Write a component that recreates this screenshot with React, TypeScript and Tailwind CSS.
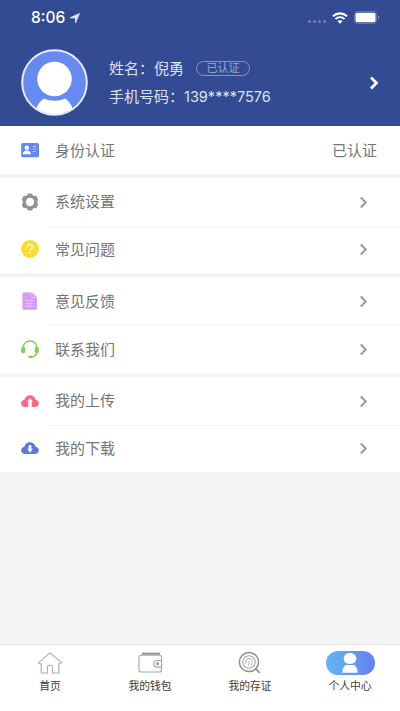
import React from "react";

type Row = {
  label: string;
  icon: React.ReactNode;
  value?: string;
};

const CloudIcon = ({ color, down }: { color: string; down?: boolean }) => (
  <svg width="18" height="18" viewBox="0 0 18 18">
    <path
      d="M4.300 15C1.900 15 .1 13.400.1 11.300c0-1.800 1.400-3.300 3.300-3.600C3.900 5.100 6.200 3.200 9 3.200s5.100 1.900 5.600 4.500c1.900.3 3.300 1.800 3.300 3.600 0 2.100-1.800 3.700-4.200 3.700z"
      fill={color}
    />
    <path
      d={down ? "M7.600 6.200h2.800v3.600h1.400L9 13.800 6.200 9.800h1.400z" : "M9 6.200l3 3.400h-1.200v5.400H7.200V9.600H6z"}
      fill="#fff"
    />
  </svg>
);

const groups: Row[][] = [
  [
    {
      label: "身份认证",
      value: "已认证",
      icon: (
        <svg width="18" height="18" viewBox="0 0 18 18">
          <rect x="0.200" y="2" width="17.800" height="14.200" rx="1.500" fill="#6488f2" />
          <circle cx="5.800" cy="6.800" r="2.200" fill="#fff" />
          <path d="M1.700 13.300c0-2.400 1.600-3.800 4.100-3.800s4.100 1.400 4.100 3.800z" fill="#fff" />
          <path d="M11.700 5.500h3.800M11.700 8h3.800M11.700 10.500h3.300" stroke="#b4c6fb" strokeWidth="1.100" />
        </svg>
      ),
    },
  ],
  [
    {
      label: "系统设置",
      icon: (
        <svg width="18" height="18" viewBox="0 0 18 18">
          <path
            d="M7 .5h4l.7 1.700 1.600.9 2-.3 1.900 3.400L16.300 8v2l.9 1.800-1.900 3.400-2-.3-1.600.9-.7 1.700H7l-.7-1.700-1.600-.9-2 .3L.8 11.800 1.700 10V8L.8 6.200l1.900-3.400 2 .3 1.600-.9z"
            fill="#929292"
          />
          <circle cx="9" cy="9" r="4.200" fill="#fff" />
        </svg>
      ),
    },
    {
      label: "常见问题",
      icon: (
        <svg width="18" height="18" viewBox="0 0 18 18">
          <circle cx="9" cy="9" r="8.900" fill="#fcdb2c" />
          <path d="M6.300 7.200C6.300 5.500 7.500 4.600 9 4.600s2.700.9 2.700 2.300c0 1.700-2.500 1.900-2.500 3.900" fill="none" stroke="#fff8d0" strokeWidth="1.500" />
          <circle cx="9.200" cy="13" r="1" fill="#fff8d0" />
        </svg>
      ),
    },
  ],
  [
    {
      label: "意见反馈",
      icon: (
        <svg width="18" height="18" viewBox="0 0 18 18">
          <path d="M2.900.4h8.300l4.800 4.800v11c0 .9-.6 1.600-1.500 1.600H2.900c-.9 0-1.500-.7-1.500-1.600V2C1.400 1.100 2 .4 2.900.4z" fill="#d79bf8" />
          <path d="M11 .8v4.700h4.600" fill="none" stroke="#e8c5fc" strokeWidth="0.900" />
          <path d="M4.500 8.500h8M4.500 11.300h8M4.500 14.100h8" stroke="#e8c8fc" strokeWidth="1.100" />
        </svg>
      ),
    },
    {
      label: "联系我们",
      icon: (
        <svg width="18" height="18" viewBox="0 0 18 18">
          <path d="M2 8.500C2 3.800 5 1.100 9 1.100s7 2.700 7 7.400M16 11c0 3.800-2.800 6-6.500 6.100" fill="none" stroke="#7fd344" strokeWidth="1.500" />
          <rect x="0.200" y="6.800" width="4" height="6.400" rx="1.700" fill="#7fd344" />
          <rect x="13.800" y="6.800" width="4" height="6.400" rx="1.700" fill="#7fd344" />
          <rect x="7.300" y="15.800" width="4.500" height="2.200" rx="1.100" fill="#7fd344" />
        </svg>
      ),
    },
  ],
  [
    { label: "我的上传", icon: <CloudIcon color="#fa6684" /> },
    { label: "我的下载", icon: <CloudIcon color="#5c79da" down /> },
  ],
];

const tabs = [
  {
    label: "首页",
    icon: (
      <svg width="26" height="24" viewBox="0 0 26 24" fill="none" stroke="#ababab" strokeWidth="1.100" strokeLinejoin="round">
        <path d="M13 1.800L1.500 11.600l1 1.200h1.700v9.200h6.300v-6c0-1 .8-1.700 1.700-1.700h1.600c1 0 1.700.7 1.700 1.700v6h6.300v-9.200h1.700l1-1.200z" />
      </svg>
    ),
  },
  {
    label: "我的钱包",
    icon: (
      <svg width="26" height="24" viewBox="0 0 26 24" fill="none" stroke="#a6a6a6" strokeWidth="1.100">
        <path d="M5 2.700h18" stroke="#969696" strokeWidth="2.200" />
        <rect x="2" y="4.200" width="22.500" height="16.800" rx="2" />
        <path d="M24.500 9.500h-4.500a3.300 3.300 0 0 0 0 6.600h4.500" />
        <circle cx="20.500" cy="12.800" r="1.200" fill="#a6a6a6" />
      </svg>
    ),
  },
  {
    label: "我的存证",
    icon: (
      <svg width="26" height="24" viewBox="0 0 26 24" fill="none" stroke="#8f8f8f">
        <circle cx="12" cy="11" r="9.600" strokeWidth="1.500" />
        <circle cx="12" cy="11" r="6.200" stroke="#a5a5a5" strokeWidth="1.100" />
        <path d="M8.800 12.700c0-4.200 1-5.200 3.200-5.200s3.200 1.300 3.200 3.700M11.200 14.700c.8-1.500.8-2.700.8-4.200M13.900 14.500c.6-.8 1-1.600 1.200-2.300" stroke="#a5a5a5" />
        <path d="M18.600 17.700l4.200 4.300" strokeWidth="1.700" />
      </svg>
    ),
  },
  {
    label: "个人中心",
    active: true,
    icon: (
      <svg width="26" height="24" viewBox="0 0 26 24" fill="#fff">
        <path d="M13 2c3.800 0 6.300 2.400 6.300 5.600S17 13 13 13 6.700 10.800 6.700 7.600 9.200 2 13 2z" />
        <path d="M8.600 14h8.800c1.900 1.400 3.100 3.800 3.400 7.700H5.200c.3-3.900 1.500-6.300 3.400-7.700z" />
      </svg>
    ),
  },
];

function StatusBar() {
  return (
    <div className="flex h-[35px] items-center justify-between pr-[20px] pl-[31px]">
      <div className="flex items-center gap-1">
        <span className="font-[Inter] text-[15.500px] font-medium leading-none">8:06</span>
        <svg width="12" height="12" viewBox="0 0 12 12">
          <path d="M1 5.800L10.500 1.500 6.500 11V6z" fill="#dfe5f5" stroke="#dfe5f5" strokeWidth="0.800" strokeLinejoin="round" />
        </svg>
      </div>
      <div className="flex items-center">
        <div className="mt-2 mr-[6px] flex gap-[2px]">
          {[0, 1, 2, 3].map((i) => (
            <span key={i} className="h-[2.500px] w-[3px] rounded-full bg-[#7083b8]" />
          ))}
        </div>
        <svg width="16" height="12" viewBox="0 0 16 12" fill="none" stroke="#fff" strokeWidth="2.100">
          <path d="M1 4.200C5 .4 11 .4 15 4.200M3.500 7.100c2.600-2.500 6.400-2.500 9 0" />
          <path d="M8 11.800L5.500 9.200c1.400-1.200 3.600-1.200 5 0z" fill="#fff" stroke="none" />
        </svg>
        <svg className="ml-[6px]" width="26" height="13" viewBox="0 0 26 13">
          <rect x="0.500" y="0.500" width="22" height="12" rx="3" fill="none" stroke="#6074b0" />
          <rect x="1.500" y="1.800" width="20" height="9.400" rx="1.500" fill="#fff" />
          <path d="M24 4.500c1.500.5 1.500 3.500 0 4z" fill="#7e8fc0" />
        </svg>
      </div>
    </div>
  );
}

function Chevron({ className }: { className: string }) {
  return (
    <svg className={className} width="10" height="14" viewBox="0 0 10 14" fill="none" stroke="currentColor">
      <path d="M2 1.500L7.500 7 2 12.500" />
    </svg>
  );
}

export default function App() {
  return (
    <div className="flex h-[711px] w-[400px] flex-col overflow-hidden bg-[#f4f4f4] font-['Liberation_Sans','Noto_Sans_CJK_SC',sans-serif]">
      <header className="h-[126px] shrink-0 bg-[#324b92] text-white">
        <StatusBar />
        <div className="flex items-center pt-[14px] pr-[21px] pl-[21px]">
          <svg width="67" height="67" viewBox="0 0 67 67">
            <defs>
              <clipPath id="avatar">
                <circle cx="33.500" cy="33.500" r="32" />
              </clipPath>
            </defs>
            <circle cx="33.500" cy="33.500" r="32.300" fill="#668aef" />
            <g clipPath="url(#avatar)" fill="#fff">
              <circle cx="33.500" cy="30" r="17.300" />
              <path d="M14 67c.5-8.500 4-14.500 9-17.500 6.500 3 14.500 3 21 0 5 3 8.500 9 9 17.500z" />
            </g>
            <circle cx="33.500" cy="33.500" r="32.300" fill="none" stroke="#e6ebfa" strokeWidth="2" />
          </svg>
          <div className="ml-[21px] flex flex-1 flex-col text-[15px] text-[#dce2f1]">
            <div className="flex h-7 items-center whitespace-nowrap">
              <span className="pt-px">姓名：倪勇</span>
              <span className="ml-[12px] flex h-[15px] w-[54px] items-center justify-center rounded-full border border-[#8193c9] text-[11px] leading-none text-[#98a8d6]">
                已认证
              </span>
            </div>
            <div className="flex h-7 items-center whitespace-nowrap">
              <span className="pt-px">手机号码：</span>
              <span className="font-[Inter] text-[14.500px] leading-5">139****7576</span>
            </div>
          </div>
          <Chevron className="stroke-[2.8] text-white" />
        </div>
      </header>

      <main className="flex flex-1 flex-col gap-1">
        {groups.map((rows, i) => (
          <section key={i} className="bg-white">
            {rows.map((row, j) => (
              <div key={row.label} className="flex h-[47.75px] items-center pl-[21px]">
                {row.icon}
                <div
                  className={`ml-[9px] flex h-full flex-1 items-center justify-between pl-[7px] text-[15px] text-[#757575] ${
                    j > 0 ? "border-t border-[#f4f4f4]" : "pt-px"
                  }`}
                >
                  <span className="pt-px">{row.label}</span>
                  {row.value ? (
                    <span className="mr-[23px] pt-px">{row.value}</span>
                  ) : (
                    <Chevron className="mr-[32px] h-[13px] w-[9px] stroke-[2.3] text-[#9a9a9a]" />
                  )}
                </div>
              </div>
            ))}
          </section>
        ))}
      </main>

      <nav className="grid h-[67px] shrink-0 grid-cols-4 border-t border-[#e4e4e4] bg-white">
        {tabs.map((tab) => (
          <div key={tab.label} className="flex flex-col items-center pt-[5.500px]">
            <div
              className={`flex h-6 w-[49px] items-center justify-center rounded-full ${
                tab.active ? "bg-linear-to-r from-[#62b5f3] to-[#6580ec]" : ""
              }`}
            >
              {tab.icon}
            </div>
            <span className="mt-[4px] text-[10.800px] leading-[14px] text-[#3c3c3c]">{tab.label}</span>
          </div>
        ))}
      </nav>
    </div>
  );
}
